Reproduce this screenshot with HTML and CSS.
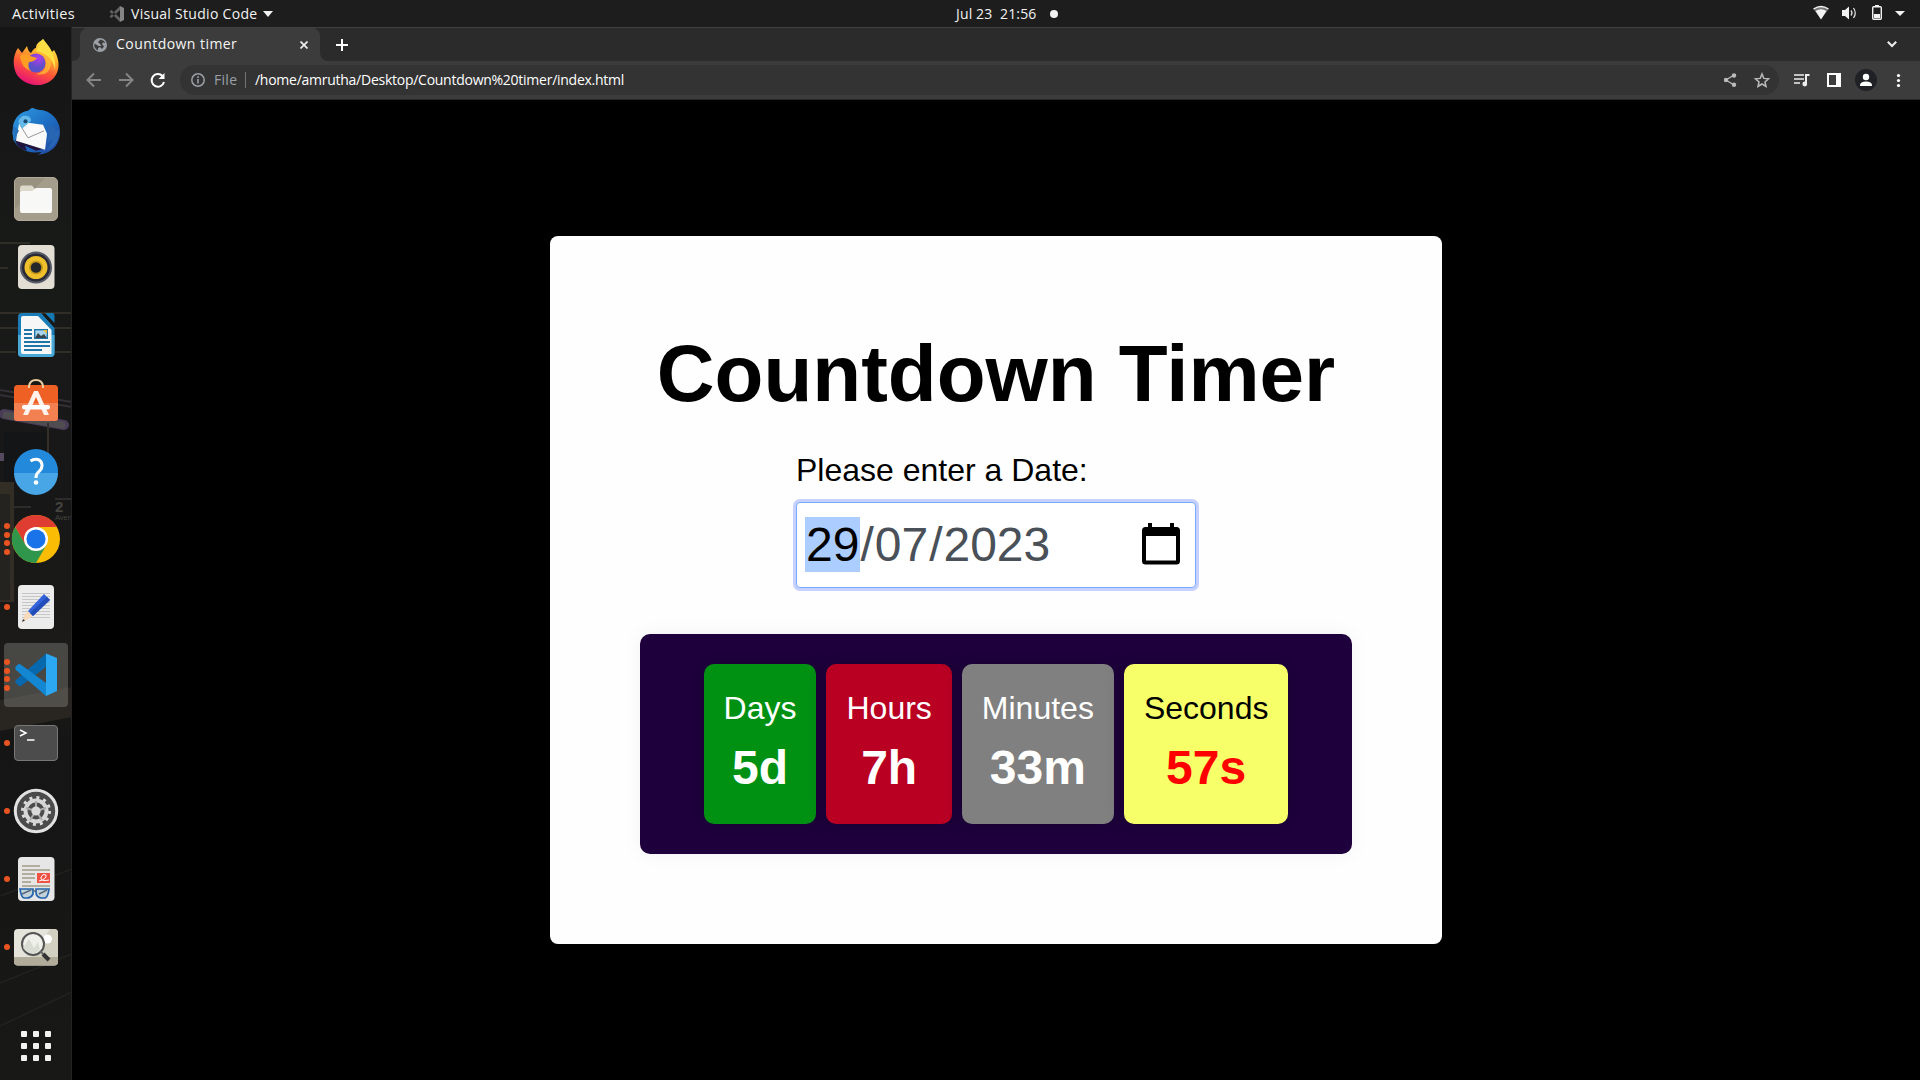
FILE: index.html
```html
<!DOCTYPE html>
<html lang="en">
<head>
<meta charset="utf-8">
<title>Countdown timer</title>
<link rel="stylesheet" href="styles.css">
</head>
<body>
<header class="topbar">
  <span class="activities">Activities</span>
  <div class="app-menu">
    <svg class="menu-logo" width="16" height="18" viewBox="0 0 16 18"><path d="M11 1 15 3V15L11 17Z" fill="#858585"/><path d="M11 1V5L2.5 13 .5 11.5ZM11 17V13L2.500 5 .5 6.500Z" fill="#626262"/></svg>
    <span class="app-name">Visual Studio Code</span>
    <svg width="10" height="6" viewBox="0 0 10 6"><path d="M0 0H10L5 6Z" fill="#f2f2f2"/></svg>
  </div>
  <div class="clock"><span class="clock-text">Jul 23&nbsp; 21:56</span><i class="notice"></i></div>
  <div class="status">
    <svg width="100" height="27" viewBox="0 0 100 27">
      <path d="M3.500 9Q11 4 18.500 9L11 19Z" fill="#777"/><path d="M3.500 9Q11 4 18.500 9" fill="none" stroke="#f2f2f2" stroke-width="1.400"/><path d="M5.500 11Q11 7.500 16.500 11L11 19.500Z" fill="#f2f2f2"/>
      <path d="M32 10H35L39 6.500V19.500L35 16H32Z" fill="#f2f2f2"/><path d="M41 10.500Q43 13 41 15.500M43.500 8Q47 13 43.500 18" fill="none" stroke="#ddd" stroke-width="1.300"/>
      <path d="M65 5H69V7H65Z" fill="#f2f2f2"/><rect x="62.700" y="6.700" width="8.600" height="12.600" rx="1" fill="none" stroke="#f2f2f2" stroke-width="1.400"/><path d="M64 14H70V18H64Z" fill="#f2f2f2"/>
      <path d="M85 11H95L90 16Z" fill="#f2f2f2"/>
    </svg>
  </div>
</header>
<div class="desktop">
  <nav class="dock">
    <svg class="wallpaper" width="72" height="1053" viewBox="0 27 72 1053" preserveAspectRatio="none">
      <defs><linearGradient id="wall" x1="0" y1="0" x2="0" y2="1"><stop offset="0" stop-color="#151515"/><stop offset=".25" stop-color="#181a18"/><stop offset=".45" stop-color="#171717"/><stop offset=".62" stop-color="#1c1b19"/><stop offset=".68" stop-color="#151515"/><stop offset="1" stop-color="#181817"/></linearGradient></defs>
      <path fill="url(#wall)" d="M0 27H72V1080H0Z"/>
      <path d="M0 243H30M0 268H8M0 313H72M0 328H72M0 352H16M55 352H72" stroke="#38362c" stroke-width="1.500"/>
      <path d="M0 390 72 402M0 395 72 407" stroke="#332f35" stroke-width="2"/>
      <path d="M4 414 64 425" stroke="#483c58" stroke-width="10" stroke-linecap="round"/><path d="M6 415 62 425" stroke="#504d50" stroke-width="7" stroke-linecap="round"/>
      <path d="M0 457H4" stroke="#564a60" stroke-width="8"/>
      <path d="M4 432H48V482H4Z" fill="#141517"/><path d="M48 423V482" stroke="#343028" stroke-width="2"/>
      <path d="M0 482H14V602H0Z" fill="#332e25"/><path d="M0 494H10V600H0Z" fill="#25231f"/>
      <path d="M14 507H31M55 499H72" stroke="#45433f"/>
      <text class="wall-number" x="55" y="512">2</text><text class="wall-word" x="55" y="520">Aven</text>
      <path d="M0 700 72 687V717L0 731Z" fill="#292621"/>
      <path d="M0 896 72 869M0 983 72 954M0 1026 72 992" stroke="#22221e" stroke-width="1.500" fill="none"/>
      <path d="M71.500 27V1080" stroke="#242424"/>
    </svg>
    <div class="dock-item">
      <svg width="72" height="68" viewBox="0 0 72 68">
        <defs><linearGradient id="fx" x1=".8" y1="0" x2=".35" y2="1"><stop offset=".05" stop-color="#fff44f"/><stop offset=".35" stop-color="#ffb02e"/><stop offset=".65" stop-color="#ff5537"/><stop offset="1" stop-color="#e6107a"/></linearGradient><radialGradient id="fxc" cx=".6" cy=".25"><stop offset="0" stop-color="#b53bea"/><stop offset="1" stop-color="#5b50c8"/></radialGradient></defs>
        <path d="M43 11C46 16 50 19 52 24L54 22C62 35 59 48 49 54C39 60 24 57 17 47C12 38 13 27 18 20L22 25 27 18C28 22 29 24 31 25Q34 20 36 20C36 15 40 14 43 11Z" fill="url(#fx)"/>
        <path d="M36 23C40 16 43 15 43 11C50 19 57 30 55 42C53 30 47 26 36 23Z" fill="#ffe044"/>
        <circle cx="36" cy="35" r="9.500" fill="url(#fxc)"/>
        <path d="M20 28Q25 24 30 28L37 30Q34 34 29 34Q27 39 31 43Q21 40 20 28Z" fill="#ff9d25"/>
        <path d="M39 26Q47 27 46 36Q45 44 36 46Q49 49 51 36Q51 26 39 26Z" fill="#ffb936" opacity=".8"/>
      </svg>
    </div>
    <div class="dock-item">
      <svg width="72" height="68" viewBox="0 -.8 72 68">
        <defs><linearGradient id="tb" x1="0" y1="0" x2="1" y2="1"><stop offset="0" stop-color="#2f9be0"/><stop offset=".5" stop-color="#1d6fc4"/><stop offset="1" stop-color="#23439b"/></linearGradient></defs>
        <path d="M13 29C15 20 21 15 28 14L32 11 38 13C52 13 61 25 60 37C59 49 51 57 38 58L42 55C29 58 16 52 13 41Z" fill="url(#tb)"/>
        <path d="M15 43Q17 52 27 54L25 49 36 54 44 52 20 42Z" fill="#21153f"/>
        <path d="M19 27 28 26 43 28 47 37 45 53 16 44Z" fill="#fafafa"/><path d="M20 28 28 41 44 34" fill="none" stroke="#999" stroke-width="1"/>
        <path d="M19 27Q17 23 23 19Q31 18 31 24L22 32Z" fill="#65b9e8"/><circle cx="25.500" cy="24.500" r="2" fill="#174a73"/><path d="M44 27C51 32 49 40 47 46L53 43 47 54Q60 47 59 33Q56 36 53 28Q51 33 44 27Z" fill="#2866b3"/>
        <path d="M13 29 12 39 15 32 13 45Q16 38 19 34" fill="#2871bb"/>
      </svg>
    </div>
    <div class="dock-item">
      <svg width="72" height="68" viewBox="0 0 72 68"><rect x="14.500" y="13.500" width="43" height="43" rx="4.500" fill="#999280" stroke="#b0aa98"/><path d="M15 45 45 14H53Q57 14 57 18V52Q57 56 53 56H19Q15 56 15 52Z" fill="#a49d8b"/><path d="M20 24Q20 21.500 22 21.500H32L35 25H50V35H20Z" fill="#dcd8ca"/><path d="M20 30Q20 27 22.500 27H32L36 24H50Q52 24 52 26V47Q52 49 50 49H22Q20 49 20 47Z" fill="#f8f8f6"/></svg>
    </div>
    <div class="dock-item">
      <svg width="72" height="68" viewBox="0 0 72 68"><rect x="18" y="13" width="36.500" height="44" rx="4" fill="#e2ded4"/><circle cx="36" cy="35.500" r="16" fill="#565969"/><circle cx="36" cy="35.500" r="14" fill="#292a33"/><circle cx="36" cy="35.500" r="11.500" fill="#f0c02c"/><circle cx="36" cy="35.500" r="7" fill="#c99b1d"/><circle cx="36" cy="35.500" r="5.300" fill="#252629"/></svg>
    </div>
    <div class="dock-item">
      <svg width="72" height="68" viewBox="0 0 72 68"><path d="M22 13H41L54.500 28V53Q54.500 57 50.500 57H22Q18 57 18 53V17Q18 13 22 13Z" fill="#1b7db7"/><path d="M18 35H54.500V53Q54.500 57 50.500 57H22Q18 57 18 53Z" fill="#48a9d6"/><path d="M23 16H38L51.500 30V54H23Q21 54 21 52V18Q21 16 23 16Z" fill="#f7f7f7"/><path d="M45 13H52Q54.500 13 54.500 16V23Z" fill="#1679b3"/><path d="M24 30H32M24 34H32M24 38H32M24 42H50M24 46H50M24 50H42" stroke="#1e75a8" stroke-width="2"/><rect x="34.700" y="29.700" width="12.600" height="8.600" fill="#a7d5ed" stroke="#1e75a8" stroke-width="1.400"/><path d="M35 38 38 33 41 36 44 34 47 38Z" fill="#38444d"/><path d="M43 30H47V34Z" fill="#eabd36"/></svg>
    </div>
    <div class="dock-item">
      <svg width="72" height="68" viewBox="0 0 72 68"><rect x="14" y="17" width="44" height="36" rx="3.500" fill="#ef6025"/><path d="M14 35H58V49.500Q58 53 54.500 53H17.500Q14 53 14 49.500Z" fill="#f28051"/><path d="M29 20V18Q30 12 36 12T43 18V20" fill="none" stroke="#eccfa0" stroke-width="2"/><path d="M34 23H38L49 47H44L36 29 28 47H23Z" fill="#fff2eb"/><rect x="22" y="37" width="28" height="4.500" rx="2" fill="#fff"/></svg>
    </div>
    <div class="dock-item">
      <svg width="72" height="68" viewBox="0 0 72 68"><circle cx="36" cy="35" r="22" fill="#2389da"/><path d="M14 37H58A22 22 0 0 1 14 37Z" fill="#48a5e6"/><path d="M30.500 25Q34 22.500 38 23.500Q42 25 42 29.500Q42 33 39 35.500Q36 37.500 36 42" fill="none" stroke="#fff" stroke-width="3"/><circle cx="36" cy="46.500" r="2.300" fill="#fff"/></svg>
    </div>
    <div class="dock-item">
      <div class="dots"><i></i><i></i><i></i><i></i></div>
      <svg width="72" height="68" viewBox="0 0 72 68"><circle cx="36" cy="35" r="24" fill="#fbbc05"/><path d="M36 35 25.600 41 15.200 23A24 24 0 0 1 56.800 23H36Z" fill="#df3c32"/><path d="M15.200 23A24 24 0 0 0 36 59L46.400 41 25.600 41Z" fill="#30964b"/><circle cx="36" cy="35" r="12" fill="#fff"/><circle cx="36" cy="35" r="9.600" fill="#1a73e8"/></svg>
    </div>
    <div class="dock-item">
      <div class="dots"><i></i></div>
      <svg width="72" height="68" viewBox="0 0 72 68"><rect x="18" y="13" width="36" height="44" rx="4" fill="#ececec"/><path d="M22 21.500H50M22 24.500H50M22 27.500H50M22 30.500H50M22 33.500H50M22 36.500H50M22 39.500H50M22 42.500H50M22 45.500H50" stroke="#bdbdbd" stroke-width=".8"/><path d="M24 43 28 39 33 44 23 50Z" fill="#f7dabb"/><path d="M28 39 44 22 50 28 33 44Z" fill="#3262db"/><path d="M30 41 47 25 50 28 33 44Z" fill="#224db8"/><path d="M23 47 25 48.500 22 50Z" fill="#333"/></svg>
    </div>
    <div class="dock-item active">
      <div class="dots"><i></i><i></i><i></i><i></i></div>
      <svg width="72" height="68" viewBox="0 0 72 68"><path d="M46 13.500V27L21 46Q19 47 15 42L16 40Z" fill="#0768ad"/><path d="M46 56V43L20 24Q17 24 15 28L16 30Z" fill="#1387d1"/><path d="M46 13.500 57 18V51L46 56Z" fill="#2ca7f1"/></svg>
    </div>
    <div class="dock-item">
      <div class="dots"><i></i></div>
      <svg width="72" height="68" viewBox="0 0 72 68"><rect x="14.500" y="17.500" width="43" height="35" rx="3.500" fill="#4c4c4c" stroke="#777"/><path d="M20 22 26 25 20 28M27 32H34.500" fill="none" stroke="#fff" stroke-width="1.500"/></svg>
    </div>
    <div class="dock-item">
      <div class="dots"><i></i></div>
      <svg width="72" height="68" viewBox="0 0 72 68"><circle cx="36" cy="35" r="20.700" fill="#4b4b4b" stroke="#e2e2e2" stroke-width="3"/><circle cx="36" cy="35" r="13.500" fill="none" stroke="#ddd" stroke-width="3" stroke-dasharray="3 4.070"/><circle cx="36" cy="35" r="10.500" fill="none" stroke="#d6d6d6" stroke-width="4"/><path d="M36 35V25M36 35 26 32M36 35 46 32M36 35 30 44M36 35 42 44" stroke="#aaa" stroke-width="2"/><circle cx="36" cy="35" r="4.600" fill="#d8d8d8"/></svg>
    </div>
    <div class="dock-item">
      <div class="dots"><i></i></div>
      <svg width="72" height="68" viewBox="0 0 72 68"><rect x="18" y="13" width="36.500" height="44" rx="4" fill="#e6e6e6"/><path d="M22 22H40M22 26H50M22 30H35M22 34H35M22 38H31M22 42H50" stroke="#b3ad9d" stroke-width="2"/><path d="M37 29H50V39H37Z" fill="#ef5145"/><path d="M39 37Q47 35 46 31Q43 29 41 33Q40 38 49 36" fill="none" stroke="#fff"/><path d="M20 45H33V50Q31 54 27 54H24Q21 53 20 45ZM36 45H49Q48 53 45 54H41Q36 53 36 48Z" fill="#b4c7d2" fill-opacity=".7" stroke="#2364ad" stroke-width="1.700"/><path d="M33 47H36M22 50 31 46M39 50 47 46" stroke="#56697c" stroke-width="1.500"/></svg>
    </div>
    <div class="dock-item">
      <div class="dots"><i></i></div>
      <svg width="72" height="68" viewBox="0 0 72 68"><rect x="14" y="17" width="44" height="36.500" rx="4" fill="#e5e4da"/><path d="M50 17H54Q58 17 58 21V45H31Z" fill="#d2d0c1"/><path d="M14 45H58V49.500Q58 53.500 54 53.500H18Q14 53.500 14 49.500Z" fill="#b1ab99"/><circle cx="47.500" cy="27" r="4.500" fill="#fff"/><circle cx="33" cy="32" r="11" fill="#eef0e9" stroke="#555" stroke-width="2"/><path d="M23 36 29 27 34 36 38 30 40 38Q34 44 26 39Z" fill="#d8dcd2"/><path d="M40 39 43 42" stroke="#666" stroke-width="2"/><path d="M43 42 49 48" stroke="#333" stroke-width="4"/></svg>
    </div>
    <div class="dock-item apps">
      <svg width="72" height="68" viewBox="0 0 72 68" fill="#f2f2f2"><rect x="21" y="19" width="6" height="6" rx="1"/><rect x="33" y="19" width="6" height="6" rx="1"/><rect x="45" y="19" width="6" height="6" rx="1"/><rect x="21" y="31" width="6" height="6" rx="1"/><rect x="33" y="31" width="6" height="6" rx="1"/><rect x="45" y="31" width="6" height="6" rx="1"/><rect x="21" y="43" width="6" height="6" rx="1"/><rect x="33" y="43" width="6" height="6" rx="1"/><rect x="45" y="43" width="6" height="6" rx="1"/></svg>
    </div>
  </nav>
  <section class="browser">
    <div class="tabstrip">
      <div class="tab-gap"></div>
      <div class="tab">
        <svg width="14" height="14" viewBox="0 0 14 14"><circle cx="7" cy="7" r="7" fill="#9aa0a6"/><path d="M7.500 1.500 5 4 7 6 8.500 8H5.500L1.500 5.500Q.5 10 5 12.500V10L7 9 9 11 11 8.500 9 6 10 4.500 12.500 5Q11 2 7.500 1.500Z" fill="#3b3b3b"/></svg>
        <span class="tab-title">Countdown timer</span>
        <svg class="tab-close" width="8" height="8" viewBox="0 0 8 8"><path d="M.5 .5 7.500 7.500M7.500 .5 .5 7.500" stroke="#eee" stroke-width="1.700"/></svg>
      </div>
      <div class="tab-rest">
        <svg width="12" height="12" viewBox="0 0 12 12"><path d="M6 0V12M0 6H12" stroke="#fff" stroke-width="2"/></svg>
        <svg class="chevron" width="10" height="7" viewBox="0 0 10 7"><path d="M.8 .8 5 5 9.200 .8" fill="none" stroke="#eee" stroke-width="2"/></svg>
      </div>
    </div>
    <div class="toolbar">
      <svg class="nav-icons" width="108" height="38" viewBox="72 61 108 38" fill="none" stroke-width="2"><path d="M101 80H88M94 73.500 87.500 80 94 86.500M119 80H132M126 73.500 132.500 80 126 86.500" stroke="#858585"/><path d="M162.500 76A6.300 6.300 0 1 0 164 82" stroke="#fff"/><path d="M164.500 73V79H158.500Z" fill="#fff"/></svg>
      <div class="address">
        <svg width="14" height="14" viewBox="0 0 14 14"><circle cx="7" cy="7" r="6.200" fill="none" stroke="#9aa0a6" stroke-width="1.500"/><path d="M7 6V10.500M7 3.300V5" stroke="#9aa0a6" stroke-width="1.600"/></svg>
        <span class="scheme">File</span><i class="divider"></i><span class="url">/home/amrutha/Desktop/Countdown%20timer/index.html</span>
        <svg class="page-actions" width="50" height="30" viewBox="1722 65 50 30"><path d="M1734 75 1726 80 1734 85" fill="none" stroke="#bbb" stroke-width="1.300"/><g fill="#bbb"><circle cx="1734" cy="75.500" r="2.200"/><circle cx="1726" cy="80" r="2.200"/><circle cx="1734" cy="84.800" r="2.200"/></g><path d="M1762 74 1763.800 78.400 1768.500 78.800 1765 81.900 1766 86.500 1762 84 1758 86.500 1759 81.900 1755.500 78.800 1760.200 78.400Z" fill="none" stroke="#bbb" stroke-width="1.500"/></svg>
      </div>
      <svg class="browser-actions" width="141" height="38" viewBox="1779 61 141 38"><path d="M1794 75H1804M1794 79H1804M1794 83H1800" stroke="#eee" stroke-width="1.700"/><path d="M1806 84V75H1809.500" fill="none" stroke="#eee" stroke-width="2"/><circle cx="1804.800" cy="84" r="2.400" fill="#eee"/><path d="M1827 73H1841V87H1827Z" fill="#fff"/><path d="M1829 75H1836V85H1829Z" fill="#3c3c3c"/><circle cx="1866" cy="80" r="11" fill="#202126"/><circle cx="1866" cy="77" r="3.200" fill="#fff"/><path d="M1860 86V84.500Q1861 81.500 1866 81.500T1872 84.500V86Z" fill="#fff"/><g fill="#fff"><circle cx="1898.500" cy="75.500" r="1.600"/><circle cx="1898.500" cy="80.500" r="1.600"/><circle cx="1898.500" cy="85.500" r="1.600"/></g></svg>
    </div>
    <main class="page">
      <div class="card">
        <h1 class="title">Countdown Timer</h1>
        <div class="field">
          <label class="field-label">Please enter a Date:</label>
          <div class="date-input">
            <span class="date-text"><span class="part selected">29</span>/<span class="part">07</span>/<span class="part">2023</span></span>
            <svg width="38" height="42" viewBox="0 0 38 42"><path d="M3.500 4H6V0H10V4H28V0H32V4H34.500Q38 4 38 7.500V38Q38 41.500 34.500 41.500H3.500Q0 41.500 0 38V7.500Q0 4 3.500 4ZM4 13V37.500H34V13Z" fill="#000" fill-rule="evenodd"/></svg>
          </div>
        </div>
        <div class="timer">
          <div class="unit days"><span class="unit-name">Days</span><b class="unit-value">5d</b></div>
          <div class="unit hours"><span class="unit-name">Hours</span><b class="unit-value">7h</b></div>
          <div class="unit minutes"><span class="unit-name">Minutes</span><b class="unit-value">33m</b></div>
          <div class="unit seconds"><span class="unit-name">Seconds</span><b class="unit-value">57s</b></div>
        </div>
      </div>
    </main>
  </section>
</div>
</body>
</html>
```
FILE: styles.css
```css
* { box-sizing: border-box; }
body { margin: 0; width: 1920px; height: 1080px; overflow: hidden; background: #000; font-family: "Liberation Sans", Arial, sans-serif; }
svg { display: block; flex: none; }

.topbar { height: 27px; display: grid; grid-template-columns: 109px 847px 1fr auto; align-items: center; background: #1d1d1d; color: #f2f2f2; font: 14px/26px "Open Sans", sans-serif; white-space: nowrap; }
.activities { padding-left: 12px; font-size: 14.500px; letter-spacing: .32px; }
.app-menu { display: flex; align-items: center; }
.menu-logo { margin-right: 6px; }
.app-name { margin-right: 5px; width: 127px; letter-spacing: .29px; }
.clock { display: flex; align-items: center; }
.clock-text { width: 93px; letter-spacing: .15px; }
.notice { width: 8px; height: 8px; border-radius: 50%; background: #f2f2f2; margin-left: 1px; }
.status { width: 110px; }

.desktop { display: flex; height: 1053px; }
.dock { width: 72px; height: 1053px; flex: none; display: flex; flex-direction: column; padding-top: 1px; position: relative; isolation: isolate; }
.wallpaper { position: absolute; left: 0; top: 0; z-index: -1; }
.wall-number { font: bold 15px "Liberation Sans", sans-serif; fill: #45443f; }
.wall-word { font: 7.500px "Liberation Sans", sans-serif; fill: #45443f; }
.dock-item { height: 68px; flex: none; position: relative; }
.active { height: 64px; width: 64px; margin: 3px 4px 1px; border-radius: 4px; background: rgba(145, 145, 140, .38); }
.active > svg { margin: -3px -4px; }
.apps { margin-top: auto; }
.dots { position: absolute; left: 4px; top: 1px; height: 68px; display: flex; flex-direction: column; justify-content: center; gap: 2.700px; }
.active .dots { left: 0; top: 0; height: 64px; }
.dots i { width: 6px; height: 6px; border-radius: 50%; background: #e95420; }

.browser { flex: 1; display: flex; flex-direction: column; border-top: 1px solid #414141; }
.tabstrip { height: 33px; display: flex; background: #3c3c3c; font: 14px/33px "Open Sans", sans-serif; }
.tab-gap { width: 8px; background: #2b2b2b; border-bottom-right-radius: 7px; }
.tab { width: 240px; display: flex; align-items: center; padding: 0 12px 0 13px; background: linear-gradient(#2b2b2b, #2b2b2b) 0 0 / 8px 8px no-repeat, linear-gradient(#2b2b2b, #2b2b2b) 100% 0 / 8px 8px no-repeat, #3c3c3c; color: #f5f5f5; position: relative; isolation: isolate; }
.tab::before { content: ""; position: absolute; inset: 0; z-index: -1; border-radius: 8px 8px 0 0; background: #3c3c3c; }
.tab-title { margin-left: 9px; padding-bottom: 2px; letter-spacing: .45px; white-space: nowrap; }
.tab-close { margin-left: auto; }
.tab-rest { flex: 1; display: flex; align-items: center; padding: 0 23px 0 16px; background: #2b2b2b; border-bottom-left-radius: 8px; }
.chevron { margin-left: auto; }
.toolbar { height: 39px; display: flex; background: #3c3c3c; border-bottom: 1px solid #292929; }
.address { width: 1599px; height: 30px; margin-top: 4px; border-radius: 15px; background: #333; display: flex; align-items: center; padding: 0 7px 0 11px; font: 14px/30px "Open Sans", sans-serif; white-space: nowrap; }
.scheme { margin-left: 9px; width: 30px; letter-spacing: .3px; color: #9aa0a6; }
.divider { width: 1px; height: 16px; background: #747474; margin: 0 9px 0 1px; }
.url { color: #fff; letter-spacing: -.26px; }
.page-actions { margin-left: auto; }

.page { flex: 1; display: flex; justify-content: center; align-items: flex-start; padding-top: 136px; background: #000; }
.card { width: 892px; height: 708px; padding: 0 90px; border-radius: 8px; background: #fefefe; display: flex; flex-direction: column; align-items: center; }
.title { margin: 92px 0 0; font-size: 80px; line-height: 92px; white-space: nowrap; }
.field { width: 400px; margin-top: 32px; }
.field-label { display: block; font-size: 32px; line-height: 36px; }
.date-input { height: 86px; margin-top: 14px; border: 1px solid #75adff; border-radius: 4px; box-shadow: 0 0 0 3px #c7d1ff; background: #fff; display: flex; align-items: center; justify-content: space-between; padding: 0 15px 2px 8px; }
.date-text { font-size: 48px; line-height: 55px; color: #495057; white-space: nowrap; }
.part { display: inline-block; padding: 0 1px; }
.selected { color: #000; background: #accdff; }
.timer { width: 712px; height: 220px; margin-top: 46px; display: flex; justify-content: center; align-items: center; gap: 10px; border-radius: 10px; background: #1e003d; box-shadow: 0 0 20px rgba(0, 0, 0, .05); }
.unit { height: 160px; padding: 26px 20px 0; border-radius: 10px; box-shadow: 0 0 20px rgba(0, 0, 0, .2); color: #fff; display: flex; flex-direction: column; align-items: center; }
.unit-name { font-size: 32px; line-height: 36px; }
.unit-value { font-size: 48px; line-height: 55px; margin-top: 14px; }
.days { background: #009113; }
.hours { background: #b90023; }
.minutes { background: #808080; }
.seconds { background: #f7ff69; color: #000; }
.seconds .unit-value { color: red; }
```
